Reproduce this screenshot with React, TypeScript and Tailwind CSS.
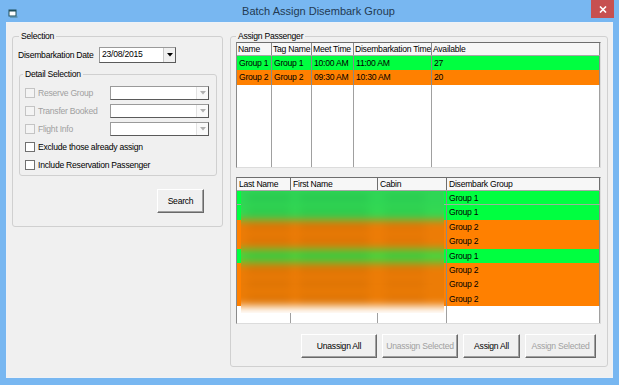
const GREEN = "bg-[#00ff40]";
const ORANGE = "bg-[#ff8000]";

const Checkbox = ({ disabled }: { disabled?: boolean }) => (
  <span
    className={
      disabled
        ? "w-[10px] h-[10px] border border-[#c4c4c4] bg-[#f4f4f4] shrink-0"
        : "w-[10px] h-[10px] border border-[#707070] bg-white shrink-0"
    }
  />
);

const Combo = ({ width, value, disabled }: { width: string; value?: string; disabled?: boolean }) => (
  <div
    className={
      "flex h-full bg-white border border-t-[#9a9a9a] border-l-[#9a9a9a] border-r-[#5a5a5a] border-b-[#5a5a5a] " + width
    }
  >
    <span className="flex-1 pl-[2px] leading-[13px] text-black">{value}</span>
    <span
      className={
        "w-[12px] flex items-center justify-center border-l " +
        (disabled ? "border-[#e2e2e2] bg-[#fafafa]" : "border-[#c8c8c8] bg-[#f0f0f0]")
      }
    >
      <svg width="6" height="4" viewBox="0 0 6 4">
        <path d="M0 0h6L3 3.5z" fill={disabled ? "#b0b0b0" : "#000"} />
      </svg>
    </span>
  </div>
);

const Button = ({ label, width, disabled }: { label: string; width: string; disabled?: boolean }) => (
  <div
    className={
      "h-[24px] flex items-center justify-center bg-[#f0f0f0] border border-t-white border-l-white border-r-[#696969] border-b-[#696969] shadow-[inset_-1px_-1px_0_#a0a0a0] " +
      width +
      (disabled ? " text-[#a0a0a0]" : " text-black")
    }
  >
    {label}
  </div>
);

const topCols = ["w-[35px]", "w-[40px]", "w-[42px]", "w-[78px]", "flex-1"];
const topHead = ["Name", "Tag Name", "Meet Time", "Disembarkation Time", "Available"];
const topRows = [
  { c: GREEN, h: "h-[14px]", v: ["Group 1", "Group 1", "10:00 AM", "11:00 AM", "27"] },
  { c: ORANGE, h: "h-[15px]", v: ["Group 2", "Group 2", "09:30 AM", "10:30 AM", "20"] },
];

const botCols = ["w-[54px]", "w-[87px]", "w-[69px]", "flex-1"];
const botHead = ["Last Name", "First Name", "Cabin", "Disembark Group"];
const groups = [1, 1, 2, 2, 1, 2, 2, 2];

const blurGreen = ["bg-[#2fd655]", "bg-[#33d852]", "", "", "bg-[#46d53d]"];

export default function App() {
  return (
    <div className="w-[619px] h-[385px] bg-[#78b7f1] flex flex-col font-['Liberation_Sans',Arial,sans-serif] text-[8.6px] tracking-[-0.25px] text-black overflow-hidden">
      {/* title bar */}
      <div className="relative h-[22px] flex items-center justify-center pl-[18px]">
        <svg className="absolute left-[8px] top-[9px]" width="10" height="9" viewBox="0 0 10 9">
          <path d="M0.5 0.5h8v7h-8z" fill="#1f4f5c" />
          <path d="M1.5 2.5h6v4h-6z" fill="#fff" />
          <path d="M2 7.5h7.5v1H2z" fill="#4a7a86" />
        </svg>
        <span className="text-[11px] tracking-normal text-[#233a52] pt-[1px]">Batch Assign Disembark Group</span>
        <div className="absolute right-[5px] top-0 w-[23px] h-[18px] bg-[#c75050] flex items-center justify-center">
          <svg width="8" height="7" viewBox="0 0 8 7">
            <path d="M1 0.5l6 6M7 0.5l-6 6" stroke="#fff" strokeWidth="1.6" />
          </svg>
        </div>
      </div>

      {/* client area */}
      <div className="mx-[6px] mb-[7px] flex-1 bg-[#f0f0f0] border border-[#eef2f7] flex gap-[7px] pl-[5px] pt-[7px]">
        {/* Selection */}
        <fieldset className="w-[211px] h-[197px] border border-[#d0d0d0] rounded-[3px] px-[5px] flex flex-col">
          <legend className="ml-[1px] px-[2px] leading-[12px]">Selection</legend>
          <div className="flex items-center mt-[5px] h-[16px]">
            <span className="w-[81px]">Disembarkation Date</span>
            <Combo width="w-[77px]" value="23/08/2015" />
          </div>

          <fieldset className="ml-[1px] mt-[5px] w-[198px] h-[108px] border border-[#d0d0d0] rounded-[3px] px-[5px] flex flex-col gap-[4px]">
            <legend className="-ml-[2px] px-[2px] leading-[12px]">Detail Selection</legend>
            {["Reserve Group", "Transfer Booked", "Flight Info"].map((l, i) => (
              <div key={l} className={"flex items-center h-[14px]" + (i === 0 ? " mt-[6px]" : "")}>
                <Checkbox disabled />
                <span className="ml-[3px] w-[72px] text-[#a0a0a0]">{l}</span>
                <Combo width="w-[99px]" disabled />
              </div>
            ))}
            {["Exclude those already assign", "Include Reservation Passenger"].map((l) => (
              <div key={l} className="flex items-center h-[14px]">
                <Checkbox />
                <span className="ml-[3px]">{l}</span>
              </div>
            ))}
          </fieldset>

          <div className="self-end mr-[13px] mt-[13px]">
            <Button label="Search" width="w-[47px]" />
          </div>
        </fieldset>

        {/* Assign Passenger */}
        <fieldset className="w-[378px] h-[337px] border border-[#d0d0d0] rounded-[3px] px-[5px] flex flex-col">
          <legend className="px-[2px] leading-[12px]">Assign Passenger</legend>

          {/* top grid */}
          <div className="w-[365px] h-[126px] bg-white border border-t-[#6e6e6e] border-l-[#8a8a8a] border-r-[#dcdcdc] border-b-[#dcdcdc] flex flex-col">
            <div className="flex h-[13px] bg-[#f7f7f7] border-b border-[#a8a8a8]">
              {topHead.map((h, i) => (
                <span key={h} className={"pl-[1px] leading-[12px] border-r border-[#8a8a8a] whitespace-nowrap overflow-hidden " + topCols[i]}>
                  {h}
                </span>
              ))}
            </div>
            {topRows.map((r, ri) => (
              <div key={ri} className={"flex " + r.h + " " + r.c}>
                {r.v.map((v, i) => (
                  <span key={i} className={"pl-[2px] leading-[14px] border-r border-[#8a8a8a] whitespace-nowrap " + topCols[i]}>
                    {v}
                  </span>
                ))}
              </div>
            ))}
            <div className="flex flex-1">
              {topCols.map((c, i) => (
                <span key={i} className={"border-r border-[#a0a0a0] " + c} />
              ))}
            </div>
          </div>

          {/* bottom grid */}
          <div className="mt-[9px] w-[365px] h-[147px] bg-white border border-t-[#6e6e6e] border-l-[#8a8a8a] border-r-[#dcdcdc] border-b-[#dcdcdc] flex flex-col">
            <div className="flex h-[13px] bg-[#f7f7f7] border-b border-[#a8a8a8]">
              {botHead.map((h, i) => (
                <span key={h} className={"pl-[2px] leading-[12px] border-r border-[#6e6e6e] whitespace-nowrap " + botCols[i]}>
                  {h}
                </span>
              ))}
            </div>
            <div className="relative flex-1 flex flex-col">
              {groups.map((g, ri) => (
                <div
                  key={ri}
                  className={
                    "flex h-[14.4px] " + (g === 1 ? GREEN : ORANGE) + (ri === 0 ? " border-b border-[#9ab39a]" : "")
                  }
                >
                  {botCols.map((c, i) => (
                    <span key={i} className={"pl-[2px] leading-[14px] border-r border-[#8a8a8a] " + c}>
                      {i === 3 ? "Group " + g : ""}
                    </span>
                  ))}
                </div>
              ))}
              <div className="flex flex-1">
                {botCols.map((c, i) => (
                  <span key={i} className={"border-r border-[#a0a0a0] " + c} />
                ))}
              </div>

              {/* blurred personal data */}
              <div className="absolute left-[4px] top-0 w-[203px] h-[122px] overflow-hidden">
                <div className="-mx-[12px] -mt-[8px] blur-[4px] flex flex-col">
                  <div className="h-[8px] bg-[#2fd655]" />
                  {groups.map((g, ri) => (
                    <div
                      key={ri}
                      className={
                        "relative h-[14.4px] " + (g === 1 ? blurGreen[ri] || "bg-[#3ad74a]" : "bg-[#ec7c06]")
                      }
                    >
                      <span className={"absolute left-[18px] top-[4px] w-[44px] h-[6px] " + (g === 1 ? "bg-[#1fa842]/40" : "bg-[#b85e00]/40")} />
                      <span className={"absolute left-[70px] top-[4px] w-[70px] h-[6px] " + (g === 1 ? "bg-[#1fa842]/40" : "bg-[#b85e00]/40")} />
                      <span className={"absolute left-[156px] top-[4px] w-[40px] h-[6px] " + (g === 1 ? "bg-[#1fa842]/30" : "bg-[#b85e00]/30")} />
                    </div>
                  ))}
                  <div className="h-[24px] bg-white" />
                </div>
              </div>
            </div>
          </div>

          {/* buttons */}
          <div className="mt-[10px] flex justify-end gap-[5px] mr-[6px]">
            <Button label="Unassign All" width="w-[76px]" />
            <Button label="Unassign Selected" width="w-[76px]" disabled />
            <Button label="Assign All" width="w-[57px]" />
            <Button label="Assign Selected" width="w-[71px]" disabled />
          </div>
        </fieldset>
      </div>
    </div>
  );
}
